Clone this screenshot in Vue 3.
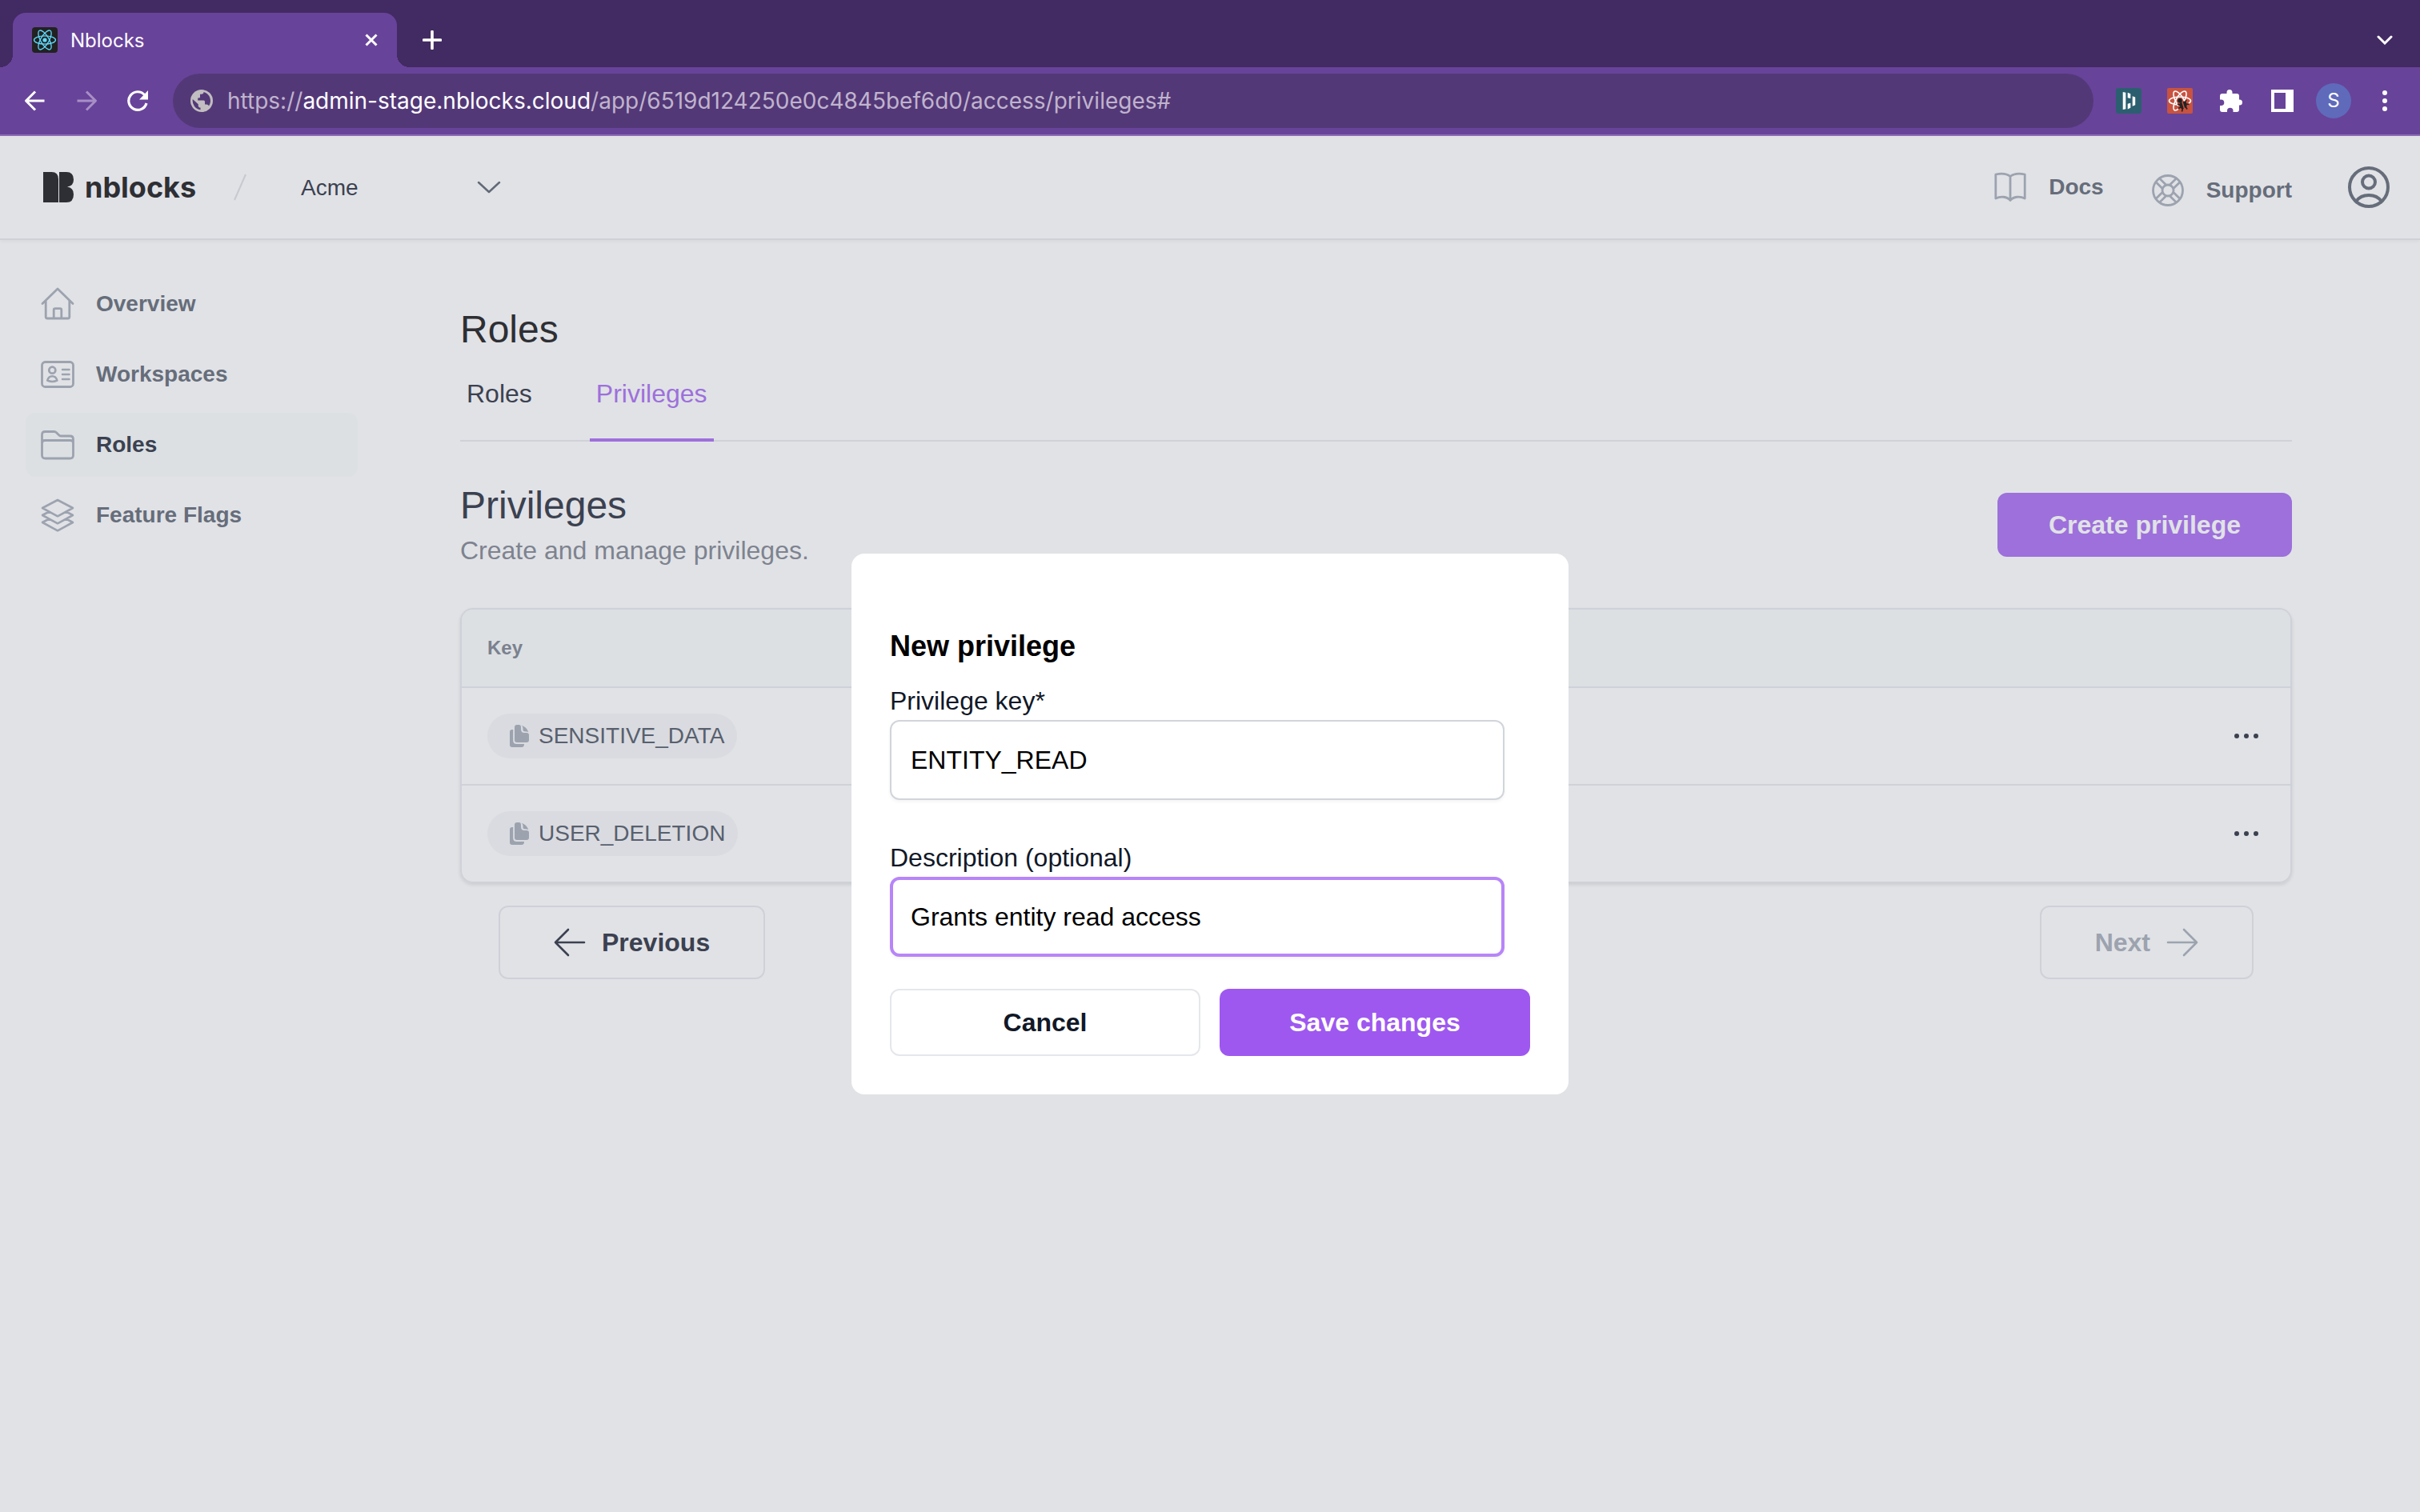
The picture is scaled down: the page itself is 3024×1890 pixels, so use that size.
<script setup>
import { ref } from 'vue'

const workspace = ref('Acme')
const privilegeKey = ref('ENTITY_READ')
const description = ref('Grants entity read access')

const navItems = [
  { label: 'Overview', icon: 'home' },
  { label: 'Workspaces', icon: 'card' },
  { label: 'Roles', icon: 'folder', active: true },
  { label: 'Feature Flags', icon: 'layers' }
]

const privileges = ['SENSITIVE_DATA', 'USER_DELETION']
</script>

<template>
  <div class="browser">
    <div class="tab-strip">
      <div class="tab">
        <svg class="favicon" viewBox="0 0 32 32" aria-hidden="true">
          <rect width="32" height="32" rx="4" fill="#222" />
          <g fill="none" stroke="#61dafb" stroke-width="1.3" transform="translate(16 16)">
            <ellipse rx="13.5" ry="5.2" />
            <ellipse rx="13.5" ry="5.2" transform="rotate(60)" />
            <ellipse rx="13.5" ry="5.2" transform="rotate(120)" />
          </g>
          <circle cx="16" cy="16" r="2.6" fill="#61dafb" />
        </svg>
        <span class="tab-title">Nblocks</span>
        <button class="bare tab-close" aria-label="Close tab">
          <svg width="16" height="16" viewBox="0 0 16 16"><path d="M1.5 1.5l13 13M14.5 1.5l-13 13" stroke="#fff" stroke-width="3" /></svg>
        </button>
      </div>
      <button class="bare new-tab" aria-label="New tab">
        <svg width="24" height="24" viewBox="0 0 24 24"><path d="M12 1.5v21M1.5 12h21" stroke="#fff" stroke-width="3.6" stroke-linecap="round" /></svg>
      </button>
      <button class="bare cell tab-search" aria-label="Search tabs">
        <svg width="20" height="12" viewBox="0 0 20 12"><path d="M2 2l8 8 8-8" fill="none" stroke="#fff" stroke-width="3" stroke-linecap="round" /></svg>
      </button>
    </div>

    <div class="toolbar">
      <button class="bare cell" aria-label="Back">
        <svg width="28" height="28" viewBox="0 0 28 28"><path d="M14 2.5L2.5 14 14 25.5M3 14h22.5" fill="none" stroke="#fff" stroke-width="3" stroke-linejoin="round" /></svg>
      </button>
      <button class="bare cell" aria-label="Forward">
        <svg width="28" height="28" viewBox="0 0 28 28"><path d="M14 2.5L25.5 14 14 25.5M25 14H2.5" fill="none" stroke="#a78fc6" stroke-width="3" stroke-linejoin="round" /></svg>
      </button>
      <button class="bare cell" aria-label="Reload">
        <svg width="28" height="28" viewBox="0 0 28 28"><path d="M22.5 6.5A11.3 11.3 0 1 0 25 17" fill="none" stroke="#fff" stroke-width="3.2" /><path d="M27 1v11.5H16z" fill="#fff" /></svg>
      </button>
      <div class="address" role="textbox" aria-label="Address">
        <svg width="28" height="28" viewBox="0 0 28 28" aria-hidden="true">
          <circle cx="14" cy="14" r="14" fill="#c2bdc0" />
          <path d="M16.5 3C16.5 5.5 15 5.7 12 5.700v3.500c0 1-1 1.300-2.800 1.300v3h7.300q1.500 0 1.500 1.500v3.500h2c1.500 0 2.500.8 3 2A11.500 11.500 0 0 0 16.500 3zM2.800 12A11.500 11.500 0 0 0 12.500 25.300V22.500q-2.800 0-2.800-2.800v-1.400z" fill="#533878" />
          <path d="M17 3.500c0 2-.5 3-1.500 4-1 .8-3.500.5-3.500 2.500s-2.500 1-2.500 3" fill="none" />
        </svg>
        <span class="url">https://<b>admin-stage.nblocks.cloud</b>/app/6519d124250e0c4845bef6d0/access/privileges#</span>
      </div>
      <button class="bare cell" aria-label="Bars extension">
        <svg width="32" height="32" viewBox="0 0 32 32"><rect width="32" height="32" rx="3" fill="#2b5f70" /><path d="M8.700 5l3.600.8v20.500l-3.600.8zM14.700 5.700l3.600 1.600V13l-3.600-.8zM14.700 19.800l3.600-1v6l-3.600 1.600zM20.700 10.300l3.500 1.200v9.800l-3.500 1.400z" fill="#fff" /></svg>
      </button>
      <button class="bare cell" aria-label="React developer tools">
        <svg width="32" height="32" viewBox="0 0 32 32">
          <rect width="32" height="32" rx="2" fill="#c85340" />
          <g fill="none" stroke="#fff" stroke-width="1.6" transform="translate(16 16)">
            <ellipse rx="13.5" ry="5" />
            <ellipse rx="13.5" ry="5" transform="rotate(60)" />
            <ellipse rx="13.5" ry="5" transform="rotate(120)" />
          </g>
          <path d="M14 21l6-5 6 1 3 7-6 5.500-9-.5z" fill="#c85340" />
          <circle cx="16" cy="15.7" r="2.8" fill="#222" />
          <path d="M15 20.500q1-2.500 3.300-2.700L20.800 26q-2 1.200-3.800-.7zM19.600 17.300q3-.8 4.300.7l.8 4.500q-.6 1.800-2.600 2.600z" fill="#222" />
          <path d="M12.800 20l3 1M14 25.500l3-1.500M18.500 29.500l.8-4M25 26.500L23 23M27.500 20.500l-4-.5M24 15l-1.500 3" stroke="#222" stroke-width="1.600" />
        </svg>
      </button>
      <button class="bare cell" aria-label="Extensions">
        <svg width="30" height="30" viewBox="0 0 30 30"><path d="M9.500 4.500a3.500 3.500 0 0 1 7 0V6H22a3 3 0 0 1 3 3v4.500h.5a3.500 3.500 0 0 1 0 7H25V26a3 3 0 0 1-3 3h-4.500v-1.500a3.500 3.500 0 0 0-7.500 0V29H4a3 3 0 0 1-3-3v-5h1.500a3.800 3.800 0 0 0 0-7.600H1V9a3 3 0 0 1 3-3h5.500z" fill="#fff" /></svg>
      </button>
      <button class="bare cell" aria-label="Side panel">
        <svg width="28" height="28" viewBox="0 0 28 28"><path d="M0 0h28v28H0zM4 4v20h14V4z" fill="#fff" fill-rule="evenodd" /></svg>
      </button>
      <button class="bare cell" aria-label="Profile"><span class="profile">S</span></button>
      <button class="bare cell" aria-label="Menu">
        <svg width="6" height="28" viewBox="0 0 6 28"><g fill="#fff"><circle cx="3" cy="4" r="3" /><circle cx="3" cy="14" r="3" /><circle cx="3" cy="24" r="3" /></g></svg>
      </button>
    </div>

    <div class="page">
      <header class="topbar">
        <a href="#" class="logo">
          <svg width="38" height="38" viewBox="0 0 38 38" aria-hidden="true"><path d="M0 0h10.500Q19 0 19 9v29H0zM20 0h9q9 0 9 9.500 0 8-8 9 8 1 8 9.500 0 10-9 10h-9z" fill="#2e2f34" /></svg>
          <span>nblocks</span>
        </a>
        <svg class="slash" width="16" height="34" viewBox="0 0 16 34" aria-hidden="true"><path d="M15 1L1 33" stroke="#c6c9d0" stroke-width="2" /></svg>
        <label class="workspace">
          <select v-model="workspace" aria-label="Workspace"><option>Acme</option></select>
          <svg width="30" height="16" viewBox="0 0 30 16" aria-hidden="true"><path d="M2 2l13 12L28 2" fill="none" stroke="#626a78" stroke-width="2.5" stroke-linecap="round" stroke-linejoin="round" /></svg>
        </label>
        <nav class="help">
          <a href="#" class="help-link docs">
            <svg width="40" height="40" viewBox="0 0 40 40" fill="none" stroke="#9ca3af" stroke-width="2.8" stroke-linejoin="round" stroke-linecap="round" aria-hidden="true"><path d="M20 6.500C15 2.500 8 2.500 1.800 4v30C8 31 16 31.500 20 36.500 24 31.500 32 31 38.200 34V4C32 2.500 25 2.500 20 6.500v30" /></svg>
            Docs
          </a>
          <a href="#" class="help-link support">
            <svg width="40" height="40" viewBox="0 0 40 40" fill="none" stroke="#9ca3af" stroke-width="2.8" aria-hidden="true">
              <g transform="translate(20 20)">
                <circle r="18.500" /><circle r="7" />
                <path v-for="angle in [45, 135, 225, 315]" :key="angle" d="M6.300 -3.200H18.200M6.300 3.200H18.200" :transform="`rotate(${angle})`" />
              </g>
            </svg>
            Support
          </a>
        </nav>
        <button class="bare account" aria-label="Account">
          <svg width="52" height="52" viewBox="-26 -26 52 52" fill="none" stroke="#666d7a" stroke-width="4"><circle r="24" /><circle cy="-6.500" r="8" /><path d="M-15.500 17.500C-9 7.500 9 7.500 15.500 17.500" /></svg>
        </button>
      </header>

      <div class="body">
        <nav class="sidebar">
          <a v-for="item in navItems" :key="item.label" href="#" class="nav-item" :class="{ active: item.active }">
            <svg width="42" height="42" viewBox="0 0 42 42" fill="none" stroke="#9ca3af" stroke-width="2.8" stroke-linecap="round" stroke-linejoin="round" aria-hidden="true">
              <path v-if="item.icon === 'home'" d="M2 20.500L21 2l19 18.500M6.200 17v20q0 2 2 2h25.600q2 0 2-2V17M16.200 39V28.500q0-1.800 1.800-1.800h6q1.800 0 1.800 1.800V39" />
              <template v-else-if="item.icon === 'card'">
                <rect x="1.500" y="5.500" width="39" height="31" rx="4" />
                <circle cx="14.300" cy="15.700" r="4" />
                <path d="M8.200 28.500q1.500-5.300 6.100-5.300t6.100 5.300q-6.100 2.800-12.200 0zM27 15h8.500M27 21h8.500M27 27h8.500" stroke-width="2.500" />
              </template>
              <path v-else-if="item.icon === 'folder'" d="M1.500 34V8.500q0-4 4-4h11.300q1.500 0 2.700 1.200l3 3q1.200 1.300 2.800 1.300h11.200q4 0 4 4V34q0 4-4 4h-31q-4 0-4-4zM1.500 19q0-3.500 3.500-3.500h32q3.500 0 3.500 3.500" />
              <path v-else d="M21 2l19 10-19 10.300L2 12zM10.500 16.500L2 21l19 10.300L40 21l-8.500-4.500M10.500 25.500L2 30l19 10.300L40 30l-8.500-4.500" stroke-width="2.600" />
            </svg>
            {{ item.label }}
          </a>
        </nav>

        <main class="content">
          <h1>Roles</h1>
          <div class="tabs">
            <a href="#">Roles</a>
            <a href="#" class="current">Privileges</a>
          </div>

          <div class="section-head">
            <div>
              <h2>Privileges</h2>
              <p>Create and manage privileges.</p>
            </div>
            <button class="create">Create privilege</button>
          </div>

          <div class="table-card">
            <table>
              <thead>
                <tr><th scope="col">Key</th><td></td></tr>
              </thead>
              <tbody>
                <tr v-for="key in privileges" :key="key">
                  <td>
                    <button class="chip">
                      <svg width="24" height="28" viewBox="0 0 24 28" fill="#9ca3af" aria-hidden="true">
                        <path d="M3 6h1.200v13.500q0 4.500 4.500 4.500H18q0 4-3 4H3q-3 0-3-3V9q0-3 3-3z" />
                        <path d="M9 0h2.500q2.500 0 2.500 3v2.500Q14 10 18.500 10H21q3 0 3 3v6q0 3-3 3H9q-3 0-3-3V3q0-3 3-3zM14.500.8q6.500 2 8.800 8.300-1.800-.8-5-.8-1.800 0-1.800-1.800V4.500q0-2.500-2-3.700z" />
                      </svg>
                      {{ key }}
                    </button>
                  </td>
                  <td class="row-actions">
                    <button class="bare" aria-label="More actions">
                      <svg width="30" height="6" viewBox="0 0 30 6" fill="#3b4150"><circle cx="3" cy="3" r="3" /><circle cx="15" cy="3" r="3" /><circle cx="27" cy="3" r="3" /></svg>
                    </button>
                  </td>
                </tr>
              </tbody>
            </table>
          </div>

          <div class="pager">
            <button class="page-button">
              <svg width="40" height="36" viewBox="0 0 40 36" aria-hidden="true"><path d="M18 2L2 18l16 16M2 18h36" /></svg>
              Previous
            </button>
            <button class="page-button muted">
              Next
              <svg width="40" height="36" viewBox="0 0 40 36" aria-hidden="true"><path d="M22 2l16 16-16 16M38 18H2" /></svg>
            </button>
          </div>
        </main>
      </div>

      <div class="overlay">
        <form class="dialog" role="dialog" aria-labelledby="dialog-title" @submit.prevent>
          <h3 id="dialog-title">New privilege</h3>
          <div class="field">
            <label for="privilege-key">Privilege key*</label>
            <input id="privilege-key" v-model="privilegeKey" type="text" />
          </div>
          <div class="field">
            <label for="privilege-description">Description (optional)</label>
            <input id="privilege-description" v-model="description" class="focused" type="text" />
          </div>
          <div class="dialog-actions">
            <button type="button" class="cancel">Cancel</button>
            <button type="submit" class="save">Save changes</button>
          </div>
        </form>
      </div>
    </div>
  </div>
</template>

<style>
body {
  margin: 0;
}
</style>

<style scoped>
*,
*::before,
*::after {
  box-sizing: border-box;
}
.browser {
  display: flex;
  flex-direction: column;
  min-height: 100vh;
  font-family: "Liberation Sans", Arial, sans-serif;
  font-size: 32px;
}
svg {
  display: block;
  flex: none;
}
a {
  color: inherit;
  text-decoration: none;
}
button,
input,
select {
  font: inherit;
}
h1,
h2,
h3,
p {
  margin: 0;
}
.bare {
  display: flex;
  align-items: center;
  justify-content: center;
  padding: 0;
  border: 0;
  background: none;
}
.cell {
  flex: none;
  width: 64px;
  height: 64px;
}

.tab-strip {
  display: flex;
  align-items: center;
  height: 84px;
  padding: 16px 12px 0 16px;
  background: #422a62;
  font-family: Inter, sans-serif;
}
.tab {
  position: relative;
  display: flex;
  align-items: center;
  width: 480px;
  height: 68px;
  padding: 0 24px;
  border-radius: 16px 16px 0 0;
  background: #68439a;
  color: #fff;
}
.tab::before,
.tab::after {
  content: "";
  position: absolute;
  bottom: 0;
  width: 16px;
  height: 16px;
}
.tab::before {
  right: 100%;
  background: radial-gradient(circle at 0 0, transparent 16px, #68439a 16px);
}
.tab::after {
  left: 100%;
  background: radial-gradient(circle at 100% 0, transparent 16px, #68439a 16px);
}
.favicon {
  width: 32px;
  height: 32px;
}
.tab-title {
  flex: 1;
  margin-left: 16px;
  font-size: 24px;
}
.new-tab {
  margin-left: 32px;
}
.tab-search {
  margin-left: auto;
}
.toolbar {
  display: flex;
  align-items: center;
  height: 86px;
  padding: 0 12px;
  border-bottom: 2px solid #8b6cb5;
  background: #68439a;
  font-family: Inter, sans-serif;
}
.address {
  display: flex;
  flex: 1;
  align-items: center;
  gap: 18px;
  height: 68px;
  margin: 0 12px;
  padding: 0 22px;
  border-radius: 34px;
  background: #533878;
  color: #c0b4cd;
  font-size: 28px;
}
.url {
  white-space: nowrap;
}
.url b {
  color: #fff;
  font-weight: 400;
}
.profile {
  width: 44px;
  border-radius: 50%;
  background: #5f6aba;
  color: #fff;
  font-size: 24px;
  line-height: 44px;
}

.page {
  position: relative;
  display: flex;
  flex: 1;
  flex-direction: column;
  background: #e1e2e6;
  color: #3b4150;
}
.topbar {
  display: flex;
  align-items: center;
  height: 130px;
  padding: 0 38px 0 54px;
  border-bottom: 2px solid #cfd1d9;
  box-shadow: 0 2px 4px rgba(0, 0, 0, 0.04);
  font-size: 28px;
}
.logo {
  display: flex;
  align-items: center;
  gap: 14px;
  width: 238px;
  color: #2e2f34;
  font-family: Inter, sans-serif;
  font-size: 36px;
  font-weight: 700;
}
.workspace {
  position: relative;
  width: 250px;
  margin-left: 68px;
}
.workspace select {
  width: 100%;
  height: 64px;
  padding: 0;
  border: 0;
  appearance: none;
  background: none;
  color: #3b4150;
}
.workspace svg {
  position: absolute;
  top: 24px;
  right: 0;
  pointer-events: none;
}
.help {
  display: flex;
  align-self: flex-start;
  align-items: flex-start;
  gap: 60px;
  margin-left: auto;
  padding-top: 44px;
  color: #666d7a;
  font-weight: 700;
}
.help-link {
  display: flex;
  align-items: center;
  gap: 28px;
  line-height: 40px;
}
.support {
  line-height: 48px;
}
.account {
  margin-left: 70px;
}

.body {
  display: flex;
  flex: 1;
}
.sidebar {
  display: flex;
  flex: none;
  flex-direction: column;
  gap: 8px;
  width: 479px;
  padding: 40px 32px;
}
.nav-item {
  display: flex;
  align-items: center;
  gap: 27px;
  height: 80px;
  padding: 0 19px;
  border-radius: 12px;
  color: #666d7a;
  font-size: 28px;
  font-weight: 700;
}
.nav-item.active {
  background: #dce0e3;
  color: #3b4150;
}
.content {
  flex: 1;
  padding: 84px 160px 0 96px;
}
h1,
h2 {
  font-size: 48px;
  font-weight: 400;
  line-height: 56px;
}
h1 {
  color: #2e2f34;
}
.tabs {
  display: flex;
  gap: 64px;
  margin-top: 28px;
  box-shadow: inset 0 -2px #cfd1d9;
  line-height: 48px;
}
.tabs a {
  padding: 0 8px 32px;
  border-bottom: 4px solid transparent;
}
.tabs .current {
  border-color: #9d70db;
  color: #9d70db;
}
.section-head {
  display: flex;
  align-items: center;
  justify-content: space-between;
  margin-top: 52px;
}
.section-head p {
  margin-top: 8px;
  color: #7d838f;
  line-height: 40px;
}
.create {
  height: 80px;
  padding: 0 64px;
  border: 0;
  border-radius: 12px;
  background: #9d70db;
  color: #e1e2e6;
  font-weight: 700;
}
.table-card {
  overflow: hidden;
  margin-top: 52px;
  border: 2px solid #cfd1d9;
  border-radius: 16px;
  box-shadow: 0 2px 4px rgba(0, 0, 0, 0.1);
}
table {
  width: 100%;
  border-collapse: separate;
  border-spacing: 0;
}
th,
td {
  height: 120px;
  padding: 0 32px;
  text-align: left;
  vertical-align: middle;
}
tbody tr + tr td {
  height: 122px;
  border-top: 2px solid #cfd1d9;
}
thead th,
thead td {
  height: 98px;
  border-bottom: 2px solid #cfd1d9;
  background: #dce0e3;
  color: #7b818e;
  font-size: 24px;
}
.chip {
  display: flex;
  align-items: center;
  gap: 12px;
  height: 56px;
  padding: 0 16px 0 28px;
  border: 0;
  border-radius: 28px;
  background: #dadbe0;
  color: #57606e;
  font-size: 28px;
}
.row-actions .bare {
  margin-left: auto;
  padding: 8px;
}
.pager {
  display: flex;
  justify-content: space-between;
  padding: 28px 48px;
}
.page-button {
  display: flex;
  align-items: center;
  gap: 20px;
  height: 92px;
  padding: 0 67px;
  border: 2px solid #cfd1d9;
  border-radius: 12px;
  background: none;
  color: #3b4150;
  font-weight: 700;
}
.page-button.muted {
  color: #9ca3af;
}
.page-button path {
  fill: none;
  stroke: currentColor;
  stroke-width: 2.6;
  stroke-linecap: round;
  stroke-linejoin: round;
}

.overlay {
  position: absolute;
  inset: 0;
  display: flex;
  align-items: center;
  justify-content: center;
}
.dialog {
  width: 896px;
  padding: 92px 48px 48px;
  border-radius: 16px;
  background: #fff;
  color: #111827;
}
.dialog h3 {
  margin-bottom: 20px;
  color: #000;
  font-size: 36px;
  line-height: 48px;
}
.field {
  display: flex;
  flex-direction: column;
  margin-right: 32px;
}
.field + .field {
  margin-top: 48px;
}
.field label {
  line-height: 48px;
}
.field input {
  height: 100px;
  padding: 0 24px;
  border: 2px solid #d1d5db;
  border-radius: 12px;
  outline: 0;
  background: #fff;
  box-shadow: 0 2px 4px rgba(0, 0, 0, 0.05);
  color: #000;
}
.field .focused {
  padding: 0 22px;
  border: 4px solid #b785f8;
}
.dialog-actions {
  display: grid;
  grid-template-columns: 1fr 1fr;
  gap: 24px;
  margin-top: 40px;
}
.dialog-actions button {
  height: 84px;
  border-radius: 12px;
  font-weight: 700;
}
.cancel {
  border: 2px solid #e5e7eb;
  background: #fff;
  color: #111827;
}
.save {
  border: 0;
  background: #9e58f0;
  color: #fff;
}
</style>
